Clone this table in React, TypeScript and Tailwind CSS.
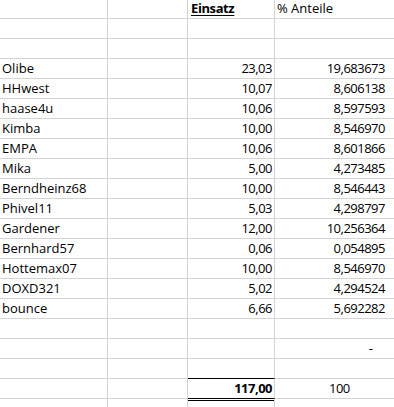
import React from 'react';

type Row = { name: string; einsatz: string; anteil: string };

const rows: Row[] = [
  { name: 'Olibe', einsatz: '23,03', anteil: '19,683673' },
  { name: 'HHwest', einsatz: '10,07', anteil: '8,606138' },
  { name: 'haase4u', einsatz: '10,06', anteil: '8,597593' },
  { name: 'Kimba', einsatz: '10,00', anteil: '8,546970' },
  { name: 'EMPA', einsatz: '10,06', anteil: '8,601866' },
  { name: 'Mika', einsatz: '5,00', anteil: '4,273485' },
  { name: 'Berndheinz68', einsatz: '10,00', anteil: '8,546443' },
  { name: 'Phivel11', einsatz: '5,03', anteil: '4,298797' },
  { name: 'Gardener', einsatz: '12,00', anteil: '10,256364' },
  { name: 'Bernhard57', einsatz: '0,06', anteil: '0,054895' },
  { name: 'Hottemax07', einsatz: '10,00', anteil: '8,546970' },
  { name: 'DOXD321', einsatz: '5,02', anteil: '4,294524' },
  { name: 'bounce', einsatz: '6,66', anteil: '5,692282' },
];

// one spreadsheet row: A (name), B (empty), C (Einsatz), D (% Anteile)
function SheetRow({
  a,
  c,
  d,
  cClass = '',
  dClass = '',
  cBottom = 'border-[#d4d4d4]',
  cInner,
}: {
  a?: React.ReactNode;
  c?: React.ReactNode;
  d?: React.ReactNode;
  cClass?: string;
  dClass?: string;
  cBottom?: string;
  cInner?: React.ReactNode;
}) {
  return (
    <div className="flex h-[20px] shrink-0">
      <div className="w-[108px] shrink-0 border-r border-b border-[#d4d4d4] pl-[2px] leading-[19px] whitespace-nowrap">
        {a}
      </div>
      <div className="w-[80px] shrink-0 border-r border-b border-[#d4d4d4]" />
      <div className={`w-[87px] shrink-0 border-r border-b border-r-[#d4d4d4] ${cBottom} leading-[19px] whitespace-nowrap ${cClass}`}>
        {cInner}
        {c}
      </div>
      <div className={`w-[120px] shrink-0 border-r border-b border-[#d4d4d4] leading-[19px] whitespace-nowrap ${dClass}`}>
        {d}
      </div>
    </div>
  );
}

export default function App() {
  return (
    <div
      className="w-[394px] h-[407px] overflow-hidden bg-white text-[13px] text-black"
      style={{ fontFamily: '"Open Sans", "Noto Sans", sans-serif' }}
    >
      <div className="flex flex-col mt-[-1px]">
        <SheetRow
          c={<span className="font-bold underline underline-offset-2 tracking-[-0.4px]">Einsatz</span>}
          cClass="pl-[3px]"
          d="% Anteile"
          dClass="pl-[2px]"
        />
        <SheetRow />
        <SheetRow />
        {rows.map((r) => (
          <SheetRow
            key={r.name}
            a={r.name}
            c={r.einsatz}
            cClass="text-right pr-[2px] tracking-[-0.5px]"
            d={r.anteil}
            dClass="text-right pr-[9px] tracking-[-0.5px]"
          />
        ))}
        <SheetRow />
        <SheetRow d="-" dClass="text-right pr-[21px]" />
        <SheetRow cBottom="border-b-black" />
        <SheetRow
          c="117,00"
          cClass="text-right pr-[2px] font-bold tracking-[-0.5px]"
          cBottom="border-b-black"
          d="100"
          dClass="pl-[54px] tracking-[-0.5px]"
        />
        <SheetRow cInner={<div className="mt-[1px] h-px bg-black" />} />
      </div>
    </div>
  );
}
